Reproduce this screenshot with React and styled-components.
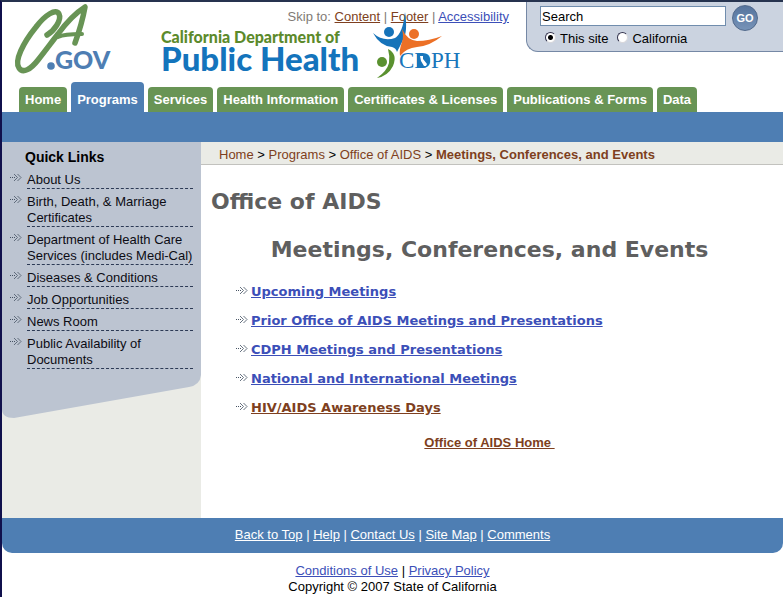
import React, { useState } from "react";
import styled, { createGlobalStyle } from "styled-components";

const sans = '"Liberation Sans", Arial, sans-serif';
const wide = '"DejaVu Sans", Verdana, sans-serif';
const green = "#689455";
const blue = "#4e7eb3";
const rust = "#7e3f20";
const link = "#3c4fb8";

const GlobalStyle = createGlobalStyle`
  * { box-sizing: border-box; }
  body { margin: 0; background: #fff; color: #000; font: 13px/16px ${sans}; }
  h1, h2, h3, ul, ol, p { margin: 0; padding: 0; }
  ul, ol { list-style: none; }
`;

const Page = styled.div`
  border-top: 2px solid #26334f;
  border-left: 2px solid #10104c;
  min-height: 100vh;
`;

const Header = styled.header`
  display: flex;
  align-items: flex-start;
  height: 80px;
`;

const StateLogo = styled.a`
  flex: none;
  margin-left: 10px;
  width: 102px;
  svg { display: block; }
`;

const Brand = styled.div`
  flex: none;
  display: grid;
  grid-template-columns: 210px 138px;
  grid-template-rows: 26px auto;
  margin-left: 47px;
`;

const SkipLinks = styled.nav`
  grid-area: 1 / 1 / 2 / 3;
  justify-self: end;
  padding-top: 7px;
  color: #817a74;
  white-space: nowrap;
`;

const TextLink = styled.a`
  color: ${(p) => p.$color || link};
  font-weight: ${(p) => (p.$bold ? "bold" : "normal")};
  text-decoration: ${(p) => (p.$plain ? "none" : "underline")};
`;

const Wordmark = styled.div`
  grid-area: 2 / 1;
  white-space: nowrap;
`;

const WordmarkTop = styled.div`
  color: #5c8a2b;
  font: 900 16px/18px Lato, ${sans};
`;

const WordmarkMain = styled.div`
  color: #1474bc;
  font: 900 33px/24px Lato, ${sans};
`;

const HealthMark = styled.svg`
  grid-area: 1 / 2 / 3 / 3;
  margin-top: 10px;
  pointer-events: none;
`;

const SearchPanel = styled.form`
  flex: 1;
  margin-left: 17px;
  padding: 3px 10px 4px 13px;
  background: #cbd3e0;
  border: solid #7588a5;
  border-width: 0 0 1px 1px;
  border-bottom-left-radius: 12px;
`;

const SearchRow = styled.div`
  display: flex;
  align-items: flex-start;
  gap: 6px;
  height: 26px;
`;

const SearchInput = styled.input`
  width: 186px;
  height: 20px;
  margin: 1px 0 0;
  padding: 0 1px;
  border: 1px solid #708dad;
  border-radius: 0;
  background: #fff;
  font: 13px/16px ${sans};
  color: #000;
`;

const GoButton = styled.button`
  width: 26px;
  height: 26px;
  padding: 0;
  border: 1px solid #50688b;
  border-radius: 50%;
  background: linear-gradient(#56749d, #7793b8);
  color: #fff;
  font: bold 11px/24px ${sans};
`;

const Scope = styled.div`
  display: flex;
  gap: 9px;
  padding-left: 5px;
`;

const RadioLabel = styled.label`
  display: flex;
  gap: 4px;
`;

const Radio = styled.input`
  appearance: none;
  width: 11px;
  height: 11px;
  margin: 1px 0 0;
  border: 1px solid;
  border-color: #33334d #d8d8dc #d8d8dc #33334d;
  border-radius: 50%;
  background: #fff;
  &:checked { background: radial-gradient(circle, #000 2px, #fff 3px); }
`;

const Tabs = styled.ul`
  display: flex;
  align-items: flex-end;
  gap: 4px;
  height: 30px;
  padding-left: 17px;
  white-space: nowrap;
`;

const Tab = styled.a`
  display: block;
  padding: ${(p) => (p.$active ? "10px 6px 4px" : "5px 6px 4px")};
  border-radius: 4px 4px 0 0;
  background: ${(p) => (p.$active ? blue : green)};
  color: #fff;
  font-weight: bold;
  text-decoration: none;
`;

const SubBar = styled.div`
  height: 30px;
  background: ${blue};
`;

const Body = styled.div`
  display: grid;
  grid-template-columns: 199px 1fr;
`;

const Sidebar = styled.aside`
  background: #eaebe6;
`;

const QuickLinks = styled.nav`
  padding: 7px 8px 0 25px;
  background: #bcc4d1;
`;

const QuickTitle = styled.h3`
  margin-left: -2px;
  font: bold 14px/16px ${sans};
`;

const QuickItem = styled.li`
  display: grid;
  grid-template-columns: 17px 1fr;
  margin-left: -17px;
  padding-top: 5px;
  svg { margin-top: 1px; }
  &:first-child { padding-top: 7px; }
`;

const QuickAnchor = styled.a`
  border-bottom: 1px dashed #2c3a55;
  color: #0c0c14;
  text-decoration: none;
`;

const PanelFoot = styled.div`
  height: 49px;
  background: #bcc4d1;
  clip-path: path("M0 0H199V6Q198 16 187 18L12 49Q0 49 0 40Z");
`;

const Breadcrumb = styled.nav`
  height: 23px;
  padding: 5px 0 0 18px;
  background: #eaebe6;
  border-bottom: 1px solid #c2c2be;
`;

const Content = styled.main`
  padding: 21px 15px 67px 10px;
`;

const Heading = styled.h1`
  color: #5f5f5f;
  font: bold 22px/32px ${wide};
`;

const SubHeading = styled(Heading).attrs({ as: "h2" })`
  margin-top: 16px;
  text-align: center;
`;

const Topics = styled.ul`
  padding: 16px 0 0 25px;
`;

const Topic = styled.li`
  display: grid;
  grid-template-columns: 15px 1fr;
  height: 29px;
  font: 13px/20px ${wide};
  svg { margin-top: 4px; }
`;

const HomeLink = styled.p`
  padding-top: 8px;
  text-align: center;
`;

const Footer = styled.footer`
  text-align: center;
`;

const FooterBar = styled.nav`
  height: 35px;
  padding-top: 9px;
  border-radius: 0 0 10px 10px;
  background: ${blue};
  color: #fff;
`;

const Legal = styled.div`
  padding-top: 10px;
`;

const Arrow = () => (
  <svg width="12" height="9" viewBox="0 0 12 9" aria-hidden="true">
    <path d="M0 4.5H1M2 4.5H3M4 4.5H5" stroke="#465364" />
    <path d="M4 1L7.500 4.500L4 8M7.500 1L11 4.500L7.500 8" fill="none" stroke="#566272" strokeWidth="0.900" />
  </svg>
);

const topics = [
  "Upcoming Meetings",
  "Prior Office of AIDS Meetings and Presentations",
  "CDPH Meetings and Presentations",
  "National and International Meetings",
  "HIV/AIDS Awareness Days",
];
const tabs = ["Home", "Programs", "Services", "Health Information", "Certificates & Licenses", "Publications & Forms", "Data"];
const quick = [
  "About Us",
  "Birth, Death, & Marriage Certificates",
  "Department of Health Care Services (includes Medi-Cal)",
  "Diseases & Conditions",
  "Job Opportunities",
  "News Room",
  "Public Availability of Documents",
];
const footerLinks = ["Back to Top", "Help", "Contact Us", "Site Map", "Comments"];

export default function App() {
  const [query, setQuery] = useState("Search");
  const [scope, setScope] = useState("site");
  return (
    <Page>
      <GlobalStyle />
      <Header>
        <StateLogo href="#" aria-label="CA.GOV">
          <svg width="102" height="76" viewBox="12 2 102 76">
            <path
              d="M47 35C54 31 62 20 59 14C56 8 45 15 36 27C23 43 14 61 19 68C23 74 31 69 38 60C46 50 51 43 58 34C66 23 74 14 85 7C83 18 79 32 75 43"
              fill="none" stroke={green} strokeWidth="5.500" strokeLinecap="round" strokeLinejoin="round"
            />
            <path d="M58 37C64 34 72 34 82 34" fill="none" stroke={green} strokeWidth="4" strokeLinecap="round" />
            <circle cx="51" cy="66" r="3.800" fill={blue} />
            <text x="55" y="69" fill={blue} fontFamily="Lato, sans-serif" fontWeight="900" fontSize="25">GOV</text>
          </svg>
        </StateLogo>
        <Brand>
          <SkipLinks>
            Skip to: <TextLink $color={rust} href="#content">Content</TextLink> |{" "}
            <TextLink $color={rust} href="#footer">Footer</TextLink> |{" "}
            <TextLink href="#">Accessibility</TextLink>
          </SkipLinks>
          <Wordmark>
            <WordmarkTop>California Department of</WordmarkTop>
            <WordmarkMain>Public Health</WordmarkMain>
          </Wordmark>
          <HealthMark width="92" height="68" viewBox="371 12 92 68" role="img" aria-label="CDPH">
            <path d="M373 33Q383 42 395 38Q403 33 405 12Q408 32 403 40Q400 46 397 52Q396 48 392 47Q380 46 373 33Z" fill="#1673b9" />
            <circle cx="389" cy="32" r="5" fill="#1673b9" />
            <path d="M402 42Q404 37 402 29Q407 40 417 41Q429 41 442 36Q430 46 417 47Q406 48 400 56Q399 50 402 42Z" fill="#ec7026" />
            <circle cx="414" cy="34" r="5" fill="#ec7026" />
            <path d="M388 49Q398 54 393 66Q388 76 377 78Q387 71 389 63Q390 56 388 49Z" fill="#5a912f" />
            <circle cx="382" cy="62" r="5" fill="#5a912f" />
            <text x="399" y="68" fill="#1976bb" fontFamily="Liberation Serif, serif" fontSize="23">CDPH</text>
            <path d="M417 53.500H422Q430 54 430 61Q429 68 422 68H417Z" fill="#1976bb" />
            <path d="M420 56H423V59L427 64L426 66H424L421 61Z" fill="#fff" />
          </HealthMark>
        </Brand>
        <SearchPanel onSubmit={(e) => e.preventDefault()}>
          <SearchRow>
            <SearchInput aria-label="Search" value={query} onChange={(e) => setQuery(e.target.value)} />
            <GoButton type="submit">GO</GoButton>
          </SearchRow>
          <Scope>
            <RadioLabel>
              <Radio type="radio" name="scope" checked={scope === "site"} onChange={() => setScope("site")} />
              This site
            </RadioLabel>
            <RadioLabel>
              <Radio type="radio" name="scope" checked={scope === "state"} onChange={() => setScope("state")} />
              California
            </RadioLabel>
          </Scope>
        </SearchPanel>
      </Header>
      <nav aria-label="Sections">
        <Tabs>
          {tabs.map((t) => (
            <li key={t}><Tab href="#" $active={t === "Programs"}>{t}</Tab></li>
          ))}
        </Tabs>
        <SubBar />
      </nav>
      <Body>
        <Sidebar>
          <QuickLinks>
            <QuickTitle>Quick Links</QuickTitle>
            <ul>
              {quick.map((q) => (
                <QuickItem key={q}><Arrow /><QuickAnchor href="#">{q}</QuickAnchor></QuickItem>
              ))}
            </ul>
          </QuickLinks>
          <PanelFoot />
        </Sidebar>
        <div>
          <Breadcrumb aria-label="Breadcrumb">
            <TextLink $plain $color={rust} href="#">Home</TextLink> &gt;{" "}
            <TextLink $plain $color={rust} href="#">Programs</TextLink> &gt;{" "}
            <TextLink $plain $color={rust} href="#">Office of AIDS</TextLink> &gt;{" "}
            <TextLink $plain $bold $color={rust} href="#">Meetings, Conferences, and Events</TextLink>
          </Breadcrumb>
          <Content id="content">
            <Heading>Office of AIDS</Heading>
            <SubHeading>Meetings, Conferences, and Events</SubHeading>
            <Topics>
              {topics.map((t, i) => (
                <Topic key={t}>
                  <Arrow />
                  <span><TextLink $bold $color={i === 4 ? rust : link} href="#">{t}</TextLink></span>
                </Topic>
              ))}
            </Topics>
            <HomeLink><TextLink $bold $color={rust} href="#">{"Office of AIDS Home\u00a0"}</TextLink></HomeLink>
          </Content>
        </div>
      </Body>
      <Footer id="footer">
        <FooterBar aria-label="Footer">
          {footerLinks.map((t, i) => (
            <React.Fragment key={t}>
              {i > 0 && " | "}
              <TextLink $color="#fff" href="#">{t}</TextLink>
            </React.Fragment>
          ))}
        </FooterBar>
        <Legal>
          <p><TextLink href="#">Conditions of Use</TextLink> | <TextLink href="#">Privacy Policy</TextLink></p>
          <p>Copyright © 2007 State of California</p>
        </Legal>
      </Footer>
    </Page>
  );
}
